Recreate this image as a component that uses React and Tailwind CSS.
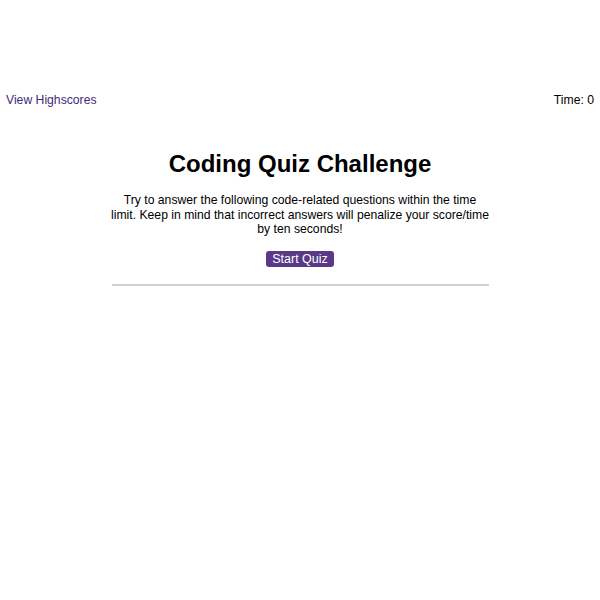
export default function App() {
  return (
    <div className="w-[600px] h-[600px] bg-white font-['Liberation_Sans',Arial,sans-serif] text-black">
      <header className="flex justify-between items-center pt-[92px] px-[6px] text-[12.2px] leading-4">
        <a className="text-[#3f2a78]">View Highscores</a>
        <span>Time: 0</span>
      </header>
      <main className="w-[380px] mx-auto mt-[41px] text-center">
        <h1 className="text-[24px] font-bold leading-[30px]">Coding Quiz Challenge</h1>
        <p className="mt-[14px] text-[12.2px] leading-[14.5px]">
          Try to answer the following code-related questions within the time limit. Keep in mind that incorrect answers will penalize your score/time by ten seconds!
        </p>
        <button className="mt-[14px] bg-[#5a3a86] text-white text-[12.5px] leading-4 px-[6px] rounded-[3px]">
          Start Quiz
        </button>
        <hr className="mt-[14px] w-[377px] mx-auto border-0 h-[2px] bg-[#d0d0d0]" />
      </main>
    </div>
  );
}
